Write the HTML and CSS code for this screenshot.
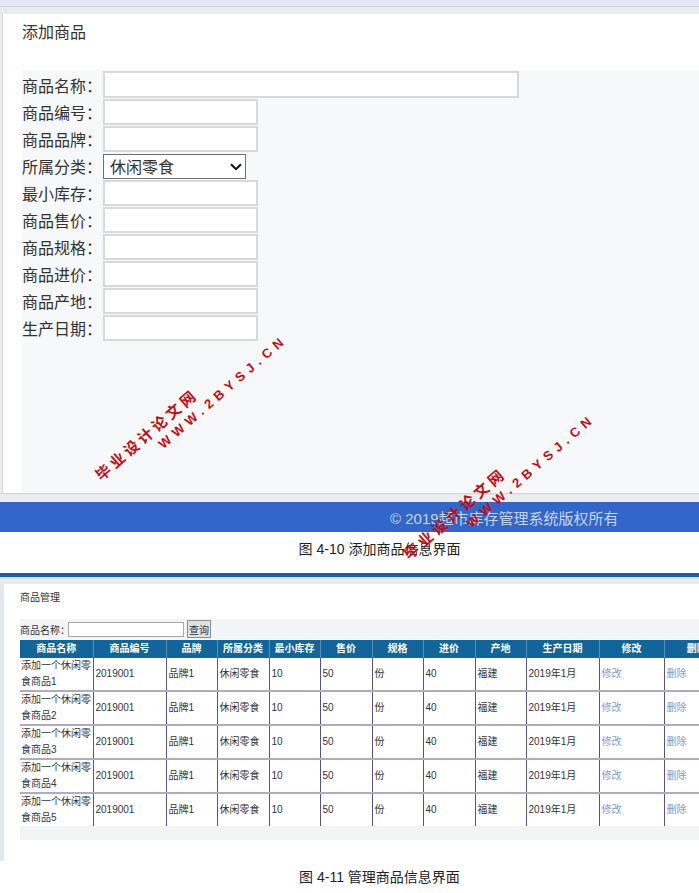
FILE: index.html
```html
<!DOCTYPE html>
<html lang="zh-CN">
<head>
<meta charset="utf-8">
<title>商品管理</title>
<link rel="stylesheet" href="styles.css">
</head>
<body>
<section class="shot-add">
  <div class="top-strip"></div>
  <div class="grey-strip"></div>
  <div class="panel">
    <div class="panel-title">添加商品</div>
    <form class="add-form">
      <div class="row"><label>商品名称：</label><input class="field wide" type="text"></div>
      <div class="row"><label>商品编号：</label><input class="field" type="text"></div>
      <div class="row"><label>商品品牌：</label><input class="field" type="text"></div>
      <div class="row"><label>所属分类：</label><span class="sel-wrap"><select class="sel"><option>休闲零食</option></select><svg class="chev" width="12" height="8" viewBox="0 0 12 8"><path d="M1 1.2 L6 6.2 L11 1.2" fill="none" stroke="#111" stroke-width="2"/></svg></span></div>
      <div class="row"><label>最小库存：</label><input class="field" type="text"></div>
      <div class="row"><label>商品售价：</label><input class="field" type="text"></div>
      <div class="row"><label>商品规格：</label><input class="field" type="text"></div>
      <div class="row"><label>商品进价：</label><input class="field" type="text"></div>
      <div class="row"><label>商品产地：</label><input class="field" type="text"></div>
      <div class="row"><label>生产日期：</label><input class="field" type="text"></div>
    </form>
  </div>
  <div class="sep"></div>
  <footer class="site-foot">© 2019超市库存管理系统版权所有</footer>
</section>
<p class="caption cap1">图 4-10 添加商品信息界面</p>
<section class="shot-list">
  <div class="blue-strip"></div>
  <div class="lblue-strip"></div>
  <div class="grey-strip2"></div>
  <div class="panel2">
    <div class="title2">商品管理</div>
    <div class="search"><label>商品名称：</label><input type="text"><button type="button">查询</button></div>
    <table class="grid">
      <colgroup>
        <col class="c73"><col class="c73"><col class="c51"><col class="c52"><col class="c51"><col class="c52">
        <col class="c51"><col class="c52"><col class="c51"><col class="c73"><col class="c65"><col class="c65">
      </colgroup>
      <thead>
        <tr><th>商品名称</th><th>商品编号</th><th>品牌</th><th>所属分类</th><th>最小库存</th><th>售价</th><th>规格</th><th>进价</th><th>产地</th><th>生产日期</th><th>修改</th><th>删除</th></tr>
      </thead>
      <tbody>
        <tr><td class="name">添加一个休闲零食商品1</td><td>2019001</td><td>品牌1</td><td>休闲零食</td><td>10</td><td>50</td><td>份</td><td>40</td><td>福建</td><td>2019年1月</td><td><a class="lnk">修改</a></td><td><a class="lnk">删除</a></td></tr>
        <tr><td class="name">添加一个休闲零食商品2</td><td>2019001</td><td>品牌1</td><td>休闲零食</td><td>10</td><td>50</td><td>份</td><td>40</td><td>福建</td><td>2019年1月</td><td><a class="lnk">修改</a></td><td><a class="lnk">删除</a></td></tr>
        <tr><td class="name">添加一个休闲零食商品3</td><td>2019001</td><td>品牌1</td><td>休闲零食</td><td>10</td><td>50</td><td>份</td><td>40</td><td>福建</td><td>2019年1月</td><td><a class="lnk">修改</a></td><td><a class="lnk">删除</a></td></tr>
        <tr><td class="name">添加一个休闲零食商品4</td><td>2019001</td><td>品牌1</td><td>休闲零食</td><td>10</td><td>50</td><td>份</td><td>40</td><td>福建</td><td>2019年1月</td><td><a class="lnk">修改</a></td><td><a class="lnk">删除</a></td></tr>
        <tr class="last"><td class="name">添加一个休闲零食商品5</td><td>2019001</td><td>品牌1</td><td>休闲零食</td><td>10</td><td>50</td><td>份</td><td>40</td><td>福建</td><td>2019年1月</td><td><a class="lnk">修改</a></td><td><a class="lnk">删除</a></td></tr>
      </tbody>
    </table>
    <div class="tail"></div>
  </div>
</section>
<p class="caption cap2">图 4-11 管理商品信息界面</p>

<div class="wm wm-cn wm1a">毕业设计论文网</div>
<div class="wm wm-en wm1b">WWW.2BYSJ.CN</div>
<div class="wm wm-cn wm2a">毕业设计论文网</div>
<div class="wm wm-en wm2b">WWW.2BYSJ.CN</div>
</body>
</html>
```

FILE: styles.css
```css
html, body {
  margin: 0;
  padding: 0;
}
body {
  width: 699px;
  height: 893px;
  overflow: hidden;
  position: relative;
  background: #fff;
  font-family: "Liberation Sans", "Noto Sans CJK SC", sans-serif;
  color: #333;
}

/* ---------- screenshot 1 ---------- */
.shot-add {
  background: #ececec;
}
.top-strip {
  height: 6px;
  background: #e3e8f2;
  border-bottom: 1px solid #cfd6e2;
}
.grey-strip {
  height: 7px;
  background: #ebebeb;
}
.panel {
  margin-left: 2px;
  border-left: 1px solid #d6d6d6;
  background: #fff;
  padding-bottom: 1px;
}
.panel-title {
  height: 56px;
  box-sizing: border-box;
  padding: 7px 0 0 19px;
  font-size: 16px;
  line-height: 24px;
  color: #333;
}
.add-form {
  margin: 0 0 0 19px;
  height: 422px;
  box-sizing: border-box;
  padding-top: 1px;
  background: #f7f8fa;
  display: flex;
  flex-direction: column;
  gap: 1px;
}
.row {
  display: flex;
  align-items: center;
}
.row label {
  width: 81px;
  font-size: 16px;
  line-height: 26px;
  color: #333;
  white-space: nowrap;
  font-family: "Noto Sans CJK SC", sans-serif;
}
.field {
  box-sizing: border-box;
  width: 155px;
  height: 26px;
  margin: 0;
  border: 2px solid #d9d9d9;
  background: #fff;
  padding: 0 4px;
}
.field.wide {
  width: 416px;
  height: 27px;
}
.sel-wrap {
  position: relative;
  display: block;
  width: 143px;
  height: 25px;
}
.sel {
  display: block;
  box-sizing: border-box;
  width: 143px;
  height: 25px;
  margin: 0;
  border: 1px solid #707070;
  border-radius: 0;
  -webkit-appearance: none;
  appearance: none;
  font-size: 16px;
  line-height: 22px;
  font-family: "Noto Sans CJK SC", sans-serif;
  color: #333;
  background: #fff;
  padding: 0 0 0 6px;
}
.chev {
  position: absolute;
  left: 127px;
  top: 9px;
  pointer-events: none;
}
.sep {
  height: 8px;
  background: #e9ecf2;
  border-top: 1px solid #cfd4dc;
}
.site-foot {
  height: 30px;
  box-sizing: border-box;
  background: #3266c9;
  color: #c8d5f0;
  font-size: 15px;
  line-height: 26px;
  padding: 4px 0 0 390px;
  white-space: nowrap;
}

/* ---------- captions ---------- */
.caption {
  margin: 0;
  text-align: center;
  font-size: 14px;
  color: #222;
  padding-left: 60px;
}
.cap1 {
  height: 41px;
  line-height: 34px;
}
.cap2 {
  height: 31px;
  line-height: 32px;
}

/* ---------- screenshot 2 ---------- */
.blue-strip {
  height: 4px;
  background: #1d5ea8;
}
.lblue-strip {
  height: 2px;
  background: #d5e2f0;
}
.grey-strip2 {
  height: 5px;
  background: #ebebeb;
}
.panel2 {
  height: 277px;
  box-sizing: border-box;
  border-left: 4px solid #e4e8ee;
  padding-left: 16px;
  overflow: hidden;
  background: #fff;
}
.title2 {
  height: 22px;
  box-sizing: border-box;
  padding-top: 6px;
  font-size: 10px;
  line-height: 16px;
}
.search {
  margin-top: 13px;
  height: 20px;
  background: #f3f4f6;
  display: flex;
  align-items: center;
  font-size: 10px;
}
.search label {
  width: 48px;
  white-space: nowrap;
}
.search input {
  box-sizing: border-box;
  width: 116px;
  height: 15px;
  border: 1px solid #a8a8a8;
  margin: 0;
  padding: 0;
  background: #fff;
}
.search button {
  margin-left: 3px;
  box-sizing: border-box;
  width: 24px;
  height: 18px;
  padding: 0;
  font-size: 10px;
  border: 1px solid #8e8e8e;
  border-radius: 0;
  background: #e1e1e1;
  font-family: inherit;
  color: #333;
}
.grid {
  margin-top: 1px;
  table-layout: fixed;
  width: 709px;
  border-collapse: collapse;
  font-size: 10px;
}
.c73 { width: 73px; }
.c65 { width: 65px; }
.c51 { width: 51px; }
.c52 { width: 52px; }
.grid th {
  height: 18px;
  padding: 0;
  background: #12659a;
  color: #fff;
  font-weight: bold;
  border-left: 1px solid #5a8fb8;
  text-align: center;
  line-height: 18px;
}
.grid th:first-child {
  border-left: none;
}
.grid td {
  height: 32px;
  padding: 0 2px;
  border-left: 1px solid #55538a;
  border-bottom: 2px solid #aeabc3;
  line-height: 16px;
  vertical-align: middle;
  color: #333;
  background: #fff;
}
.grid td.name {
  border-left: none;
  padding: 0 0 0 1px;
}
.grid tr.last td {
  border-bottom: none;
}
.lnk {
  color: #7c9dd0;
  text-decoration: none;
}
.tail {
  height: 14px;
  background: #f3f4f6;
}

/* ---------- watermark overlay ---------- */
.wm {
  position: absolute;
  margin: 0;
  transform-origin: 0 0;
  transform: rotate(-41deg);
  color: #c40d12;
  font-weight: bold;
  white-space: nowrap;
  line-height: 1;
}
.wm-cn {
  font-family: "Noto Sans CJK SC", sans-serif;
  font-size: 15px;
  letter-spacing: 3.6px;
}
.wm-en {
  font-family: "Liberation Sans", sans-serif;
  font-size: 13px;
  letter-spacing: 5.2px;
}
.wm1a { left: 92px; top: 471px; }
.wm1b { left: 156px; top: 441px; }
.wm2a { left: 400px; top: 550px; }
.wm2b { left: 464px; top: 520px; }
```
